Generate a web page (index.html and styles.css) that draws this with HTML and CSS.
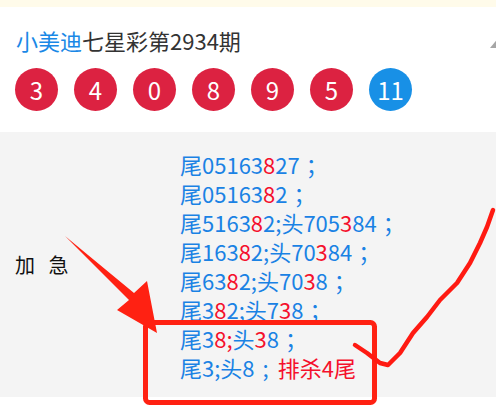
FILE: index.html
```html
<!DOCTYPE html>
<html lang="zh-CN">
<head>
<meta charset="utf-8">
<title>小美迪七星彩第2934期</title>
<link rel="stylesheet" href="styles.css">
</head>
<body>
<div class="page">
  <div class="notice"></div>
  <div class="header">
    <div class="title"><span class="brand">小美迪</span>七星彩第2934期</div>
    <div class="balls">
      <span class="ball">3</span>
      <span class="ball">4</span>
      <span class="ball">0</span>
      <span class="ball">8</span>
      <span class="ball">9</span>
      <span class="ball">5</span>
      <span class="ball blue">11</span>
    </div>
  </div>
  <div class="panel">
    <div class="label">加 急</div>
    <div class="lines">
      <div class="line">尾05163<span class="r">8</span>27<span class="semi">；</span></div>
      <div class="line">尾05163<span class="r">8</span>2<span class="semi">；</span></div>
      <div class="line">尾5163<span class="r">8</span>2;头705<span class="r">3</span>84<span class="semi">；</span></div>
      <div class="line">尾163<span class="r">8</span>2;头70<span class="r">3</span>84<span class="semi">；</span></div>
      <div class="line">尾63<span class="r">8</span>2;头70<span class="r">3</span>8<span class="semi">；</span></div>
      <div class="line">尾3<span class="r">8</span>2;头7<span class="r">3</span>8<span class="semi">；</span></div>
      <div class="line">尾3<span class="r">8;</span>头<span class="r">3</span>8<span class="semi">；</span></div>
      <div class="line">尾3;头8<span class="semi-half">;</span><span class="r">排杀4尾</span></div>
    </div>
  </div>
  <div class="footer"></div>
  <svg class="overlay" width="496" height="420" viewBox="0 0 496 420">
    <polygon points="490,48 500,36 510,48" fill="#a6a6a6"/>
    <polygon points="65,236 134,293 147,281 157,333 117,310 129,300" fill="#ff2112"/>
    <rect x="145.5" y="322.5" width="229" height="80" rx="4" fill="none" stroke="#ff2112" stroke-width="5"/>
    <polyline points="493,210 487,227 480,243 470,263 457,283 440,300 427,317 413,333 400,353 388,365 380,363 367,353 355,345" fill="none" stroke="#ff1a12" stroke-width="4.5" stroke-linecap="round" stroke-linejoin="round"/>
  </svg>
</div>
</body>
</html>
```
FILE: styles.css
```css
* { box-sizing: border-box; }
html, body { margin: 0; padding: 0; background: #fff; }
body {
  font-family: "Noto Sans CJK SC", "Noto Sans", sans-serif;
  width: 496px;
  height: 420px;
  overflow: hidden;
}
.page { position: relative; width: 496px; height: 420px; }
.notice { height: 7px; background: #fffbea; }
.header { padding: 18px 0 21px 16px; }
.title { font-size: 22px; line-height: 30px; height: 30px; color: #333; }
.brand { color: #1a88e6; }
.balls { display: flex; gap: 16px; margin-top: 13px; margin-left: -1px; }
.ball {
  width: 43px; height: 43px; border-radius: 50%;
  background: #dc2241; color: #fff;
  font-size: 24px; line-height: 43px; text-align: center;
}
.ball.blue { background: #1890e6; }
.panel {
  background: #f4f4f4;
  display: flex; align-items: center;
  height: 265px;
}
.label { width: 180px; padding-left: 15px; font-size: 20px; color: #111; word-spacing: 9px; }
.lines { font-size: 22px; color: #1a82e4; padding-top: 2px; }
.line { height: 29px; line-height: 29px; white-space: nowrap; }
.r { color: #f5102c; }
.semi { margin-left: 6px; }
.semi-half { margin-left: 8px; margin-right: 9px; }
.overlay { position: absolute; left: 0; top: 0; pointer-events: none; }
```
